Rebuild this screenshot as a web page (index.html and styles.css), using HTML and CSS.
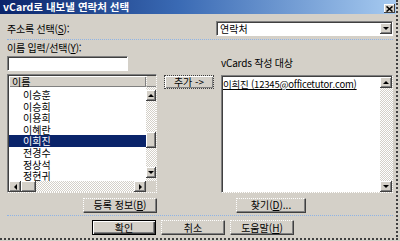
FILE: index.html
```html
<!DOCTYPE html>
<html lang="ko">
<head>
<meta charset="utf-8">
<title>vCard로 내보낼 연락처 선택</title>
<link rel="stylesheet" href="styles.css">
</head>
<body>
<div class="window">
  <div class="titlebar">
    <span class="title">vCard로 내보낼 연락처 선택</span>
    <span class="close"><svg width="7" height="6" viewBox="0 0 7 6"><path d="M0.5 0.5 L6.5 5.5 M6.5 0.5 L0.5 5.5" stroke="#000" stroke-width="1.6"/></svg></span>
  </div>
  <div class="content">
    <div class="row-book">
      <span class="label">주소록 선택(<u>S</u>):</span>
      <div class="combo">
        <span class="combo-text">연락처</span>
        <span class="sbtn combo-btn"><i class="tri-down"></i></span>
      </div>
    </div>
    <div class="sep"></div>
    <div class="main">
      <div class="name-block">
        <span class="label">이름 입력/선택(<u>Y</u>):</span>
        <div class="input"></div>
      </div>
      <span class="label target-label">vCards 작성 대상</span>

      <div class="llist">
        <div class="llist-in">
          <div class="lhead">이름</div>
          <div class="lhead-end"></div>
          <div class="lrows">
            <div class="lrow">이승훈</div>
            <div class="lrow">이승희</div>
            <div class="lrow">이용희</div>
            <div class="lrow">이혜란</div>
            <div class="lrow sel">이희진</div>
            <div class="lrow">전경수</div>
            <div class="lrow">정상석</div>
            <div class="lrow">정현귀</div>
          </div>
          <div class="vscroll">
            <span class="track t-top"></span>
            <span class="sbtn arrow"><i class="tri-up"></i></span>
            <span class="track t-a"></span>
            <span class="sbtn thumb-v"></span>
            <span class="track t-b"></span>
            <span class="sbtn arrow"><i class="tri-down"></i></span>
            <span class="track t-end"></span>
          </div>
          <div class="hscroll">
            <span class="sbtn harrow"><i class="tri-left"></i></span>
            <span class="sbtn thumb-h"></span>
            <span class="track t-fill"></span>
            <span class="sbtn harrow"><i class="tri-right"></i></span>
          </div>
          <div class="corner"></div>
        </div>
      </div>

      <div class="mid"><button class="btn add">추가 -&gt;</button></div>

      <div class="rlist">
        <div class="rlist-in">
          <div class="ritems">
            <div class="ritem">이희진 (12345@officetutor.com)</div>
          </div>
          <div class="vscroll r">
            <span class="sbtn rarrow"><i class="tri-up"></i></span>
            <span class="track t-fill"></span>
            <span class="sbtn rarrow"><i class="tri-down"></i></span>
          </div>
        </div>
      </div>

      <div class="props-cell"><button class="btn props">등록 정보(<u>B</u>)</button></div>
      <div class="find-cell"><button class="btn find">찾기(<u>D</u>)...</button></div>
    </div>
    <div class="sep sep2"></div>
    <div class="actions">
      <button class="btn default">확인</button>
      <button class="btn">취소</button>
      <button class="btn">도움말(<u>H</u>)</button>
    </div>
  </div>
</div>
</body>
</html>
```
FILE: styles.css
```css
* { box-sizing: border-box; }
html, body { margin: 0; padding: 0; background: #d4d0c8; }
body {
  font-family: "Noto Sans CJK KR", "Noto Sans", sans-serif;
  font-size: 10px;
  color: #000;
}
u { text-decoration: underline; }

.window {
  width: 398px;
  height: 240px;
  background: #d4d0c8;
  border-right: 2px dotted #404040;
  border-bottom: 2px dotted #404040;
}

.titlebar {
  display: flex;
  justify-content: space-between;
  height: 14px;
  background: linear-gradient(90deg, #0a246a 0%, #3a6ab4 45%, #a6caf0 100%);
}
.title {
  color: #fff;
  font-weight: bold;
  font-size: 10.5px;
  line-height: 14px;
  padding-left: 3px;
  white-space: nowrap;
}
.close {
  width: 11px;
  height: 9px;
  margin: 4px 1px 0 0;
  background: #d4d0c8;
  box-shadow: inset -1px -1px #404040, inset 1px 1px #fff;
  display: flex;
  align-items: center;
  justify-content: center;
}

.content { padding: 0 3px 0 7px; }

.label { line-height: 12px; white-space: nowrap; letter-spacing: -0.2px; }

.row-book {
  display: flex;
  align-items: center;
  justify-content: space-between;
  margin-top: 7px;
  height: 15px;
}

.combo {
  width: 177px;
  height: 15px;
  display: flex;
  background: #fff;
  border: 1px solid;
  border-style: solid dotted dotted solid;
  border-color: #808080 #fff #fff #808080;
  box-shadow: inset 1px 1px #404040;
  padding: 1px 0 1px 1px;
}
.combo-text { flex: 1; padding-left: 2px; line-height: 11px; }
.combo-btn { width: 12px; }

.sep {
  border-top: 1px dotted #8fb4e6;
  margin-top: 3px;
}

.main {
  display: grid;
  grid-template-columns: 150px 64px 172px;
  grid-template-rows: 29px 119px 16px;
  row-gap: 3px;
  margin-top: 2px;
}

.name-block { display: flex; flex-direction: column; }
.input {
  width: 121px;
  height: 15px;
  margin-top: 2px;
  background: #fff;
  border: 1px solid;
  border-style: solid dotted dotted solid;
  border-color: #808080 #fff #fff #808080;
  box-shadow: inset 1px 1px #404040;
}
.target-label {
  grid-column: 3;
  align-self: end;
  margin-bottom: 2px;
}

/* sunken list boxes */
.llist, .rlist {
  border: 1px solid;
  border-style: solid dotted dotted solid;
  border-color: #808080 #fff #fff #808080;
}
.llist { grid-column: 1; height: 119px; }
.llist-in {
  height: 100%;
  border-top: 1px solid #404040;
  border-left: 1px solid #404040;
  display: grid;
  grid-template-columns: 137px 10px;
  grid-template-rows: 11px 94px 11px;
}
.lhead {
  background: #d4d0c8;
  box-shadow: inset 1px 1px #fff, inset -1px -1px #808080;
  padding-left: 3px;
  line-height: 11px;
}
.lhead-end {
  background: #d4d0c8;
  border-left: 1px dotted #fff;
  border-bottom: 1px solid #808080;
}
.lrows {
  background: #fff;
  overflow: hidden;
  padding-top: 2px;
}
.lrow {
  height: 11.6px;
  line-height: 11.6px;
  padding-left: 14px;
  white-space: nowrap;
}
.lrow.sel { background: #0a246a; color: #fff; }

.vscroll { display: flex; flex-direction: column; }
.track {
  display: block;
  background-color: #fff;
  background-image: repeating-conic-gradient(#d4d0c8 0 25%, #fff 0 50%);
  background-size: 2px 2px;
}
.t-top { height: 3px; }
.t-a { height: 31px; }
.t-b { height: 19px; }
.t-end { height: 3px; }
.t-fill { flex: 1; }

.sbtn {
  display: flex;
  align-items: center;
  justify-content: center;
  background: #d4d0c8;
  box-shadow: inset -1px -1px #404040, inset 1px 1px #fff, inset -2px -2px #808080;
}
.arrow { height: 11px; }
.thumb-v { height: 16px; }
.rarrow { height: 11px; }
.harrow { width: 12px; }
.thumb-h { width: 15px; }

.hscroll { display: flex; }
.corner { background: #d4d0c8; }

.tri-up, .tri-down, .tri-left, .tri-right { display: block; width: 0; height: 0; }
.tri-up { border-left: 3px solid transparent; border-right: 3px solid transparent; border-bottom: 3px solid #000; }
.tri-down { border-left: 3px solid transparent; border-right: 3px solid transparent; border-top: 3px solid #000; }
.tri-left { border-top: 3px solid transparent; border-bottom: 3px solid transparent; border-right: 3px solid #000; }
.tri-right { border-top: 3px solid transparent; border-bottom: 3px solid transparent; border-left: 3px solid #000; }

.rlist { grid-column: 3; grid-row: 2; height: 118px; margin-top: 1px; }
.rlist-in {
  height: 100%;
  border-top: 1px solid #404040;
  border-left: 1px solid #404040;
  display: grid;
  grid-template-columns: 1fr 12px;
  background: #fff;
}
.ritems { padding-top: 1px; }
.ritem {
  font-size: 9.5px;
  letter-spacing: -0.2px;
  line-height: 12px;
  text-decoration: underline;
  white-space: nowrap;
}

.btn {
  font-family: inherit;
  font-size: 10px;
  color: #000;
  height: 15px;
  padding: 0;
  line-height: 12px;
  background: #d4d0c8;
  border: 1px solid;
  border-style: dotted solid solid dotted;
  border-color: #fff #404040 #404040 #fff;
  box-shadow: inset -1px -1px #808080;
  white-space: nowrap;
}
.mid { grid-column: 2; grid-row: 2; justify-self: center; }
.add {
  width: 50px;
  height: 14px;
  border: 1px dotted #404040;
  box-shadow: inset 1px 1px #fff, inset -1px -1px #808080;
}
.props-cell { grid-column: 1; grid-row: 3; justify-self: end; padding-top: 1px; }
.props { width: 74px; }
.find-cell { grid-column: 3; grid-row: 3; padding: 1px 0 0 15px; }
.find { width: 70px; }

.sep2 { margin-top: 3px; }

.actions {
  display: flex;
  gap: 5px;
  padding-left: 85px;
  margin-top: 4px;
}
.actions .btn { width: 64px; }
.btn.default {
  border: 1px solid #000;
  box-shadow: inset 1px 1px #fff, inset -1px -1px #404040, inset -2px -2px #808080;
}
```
